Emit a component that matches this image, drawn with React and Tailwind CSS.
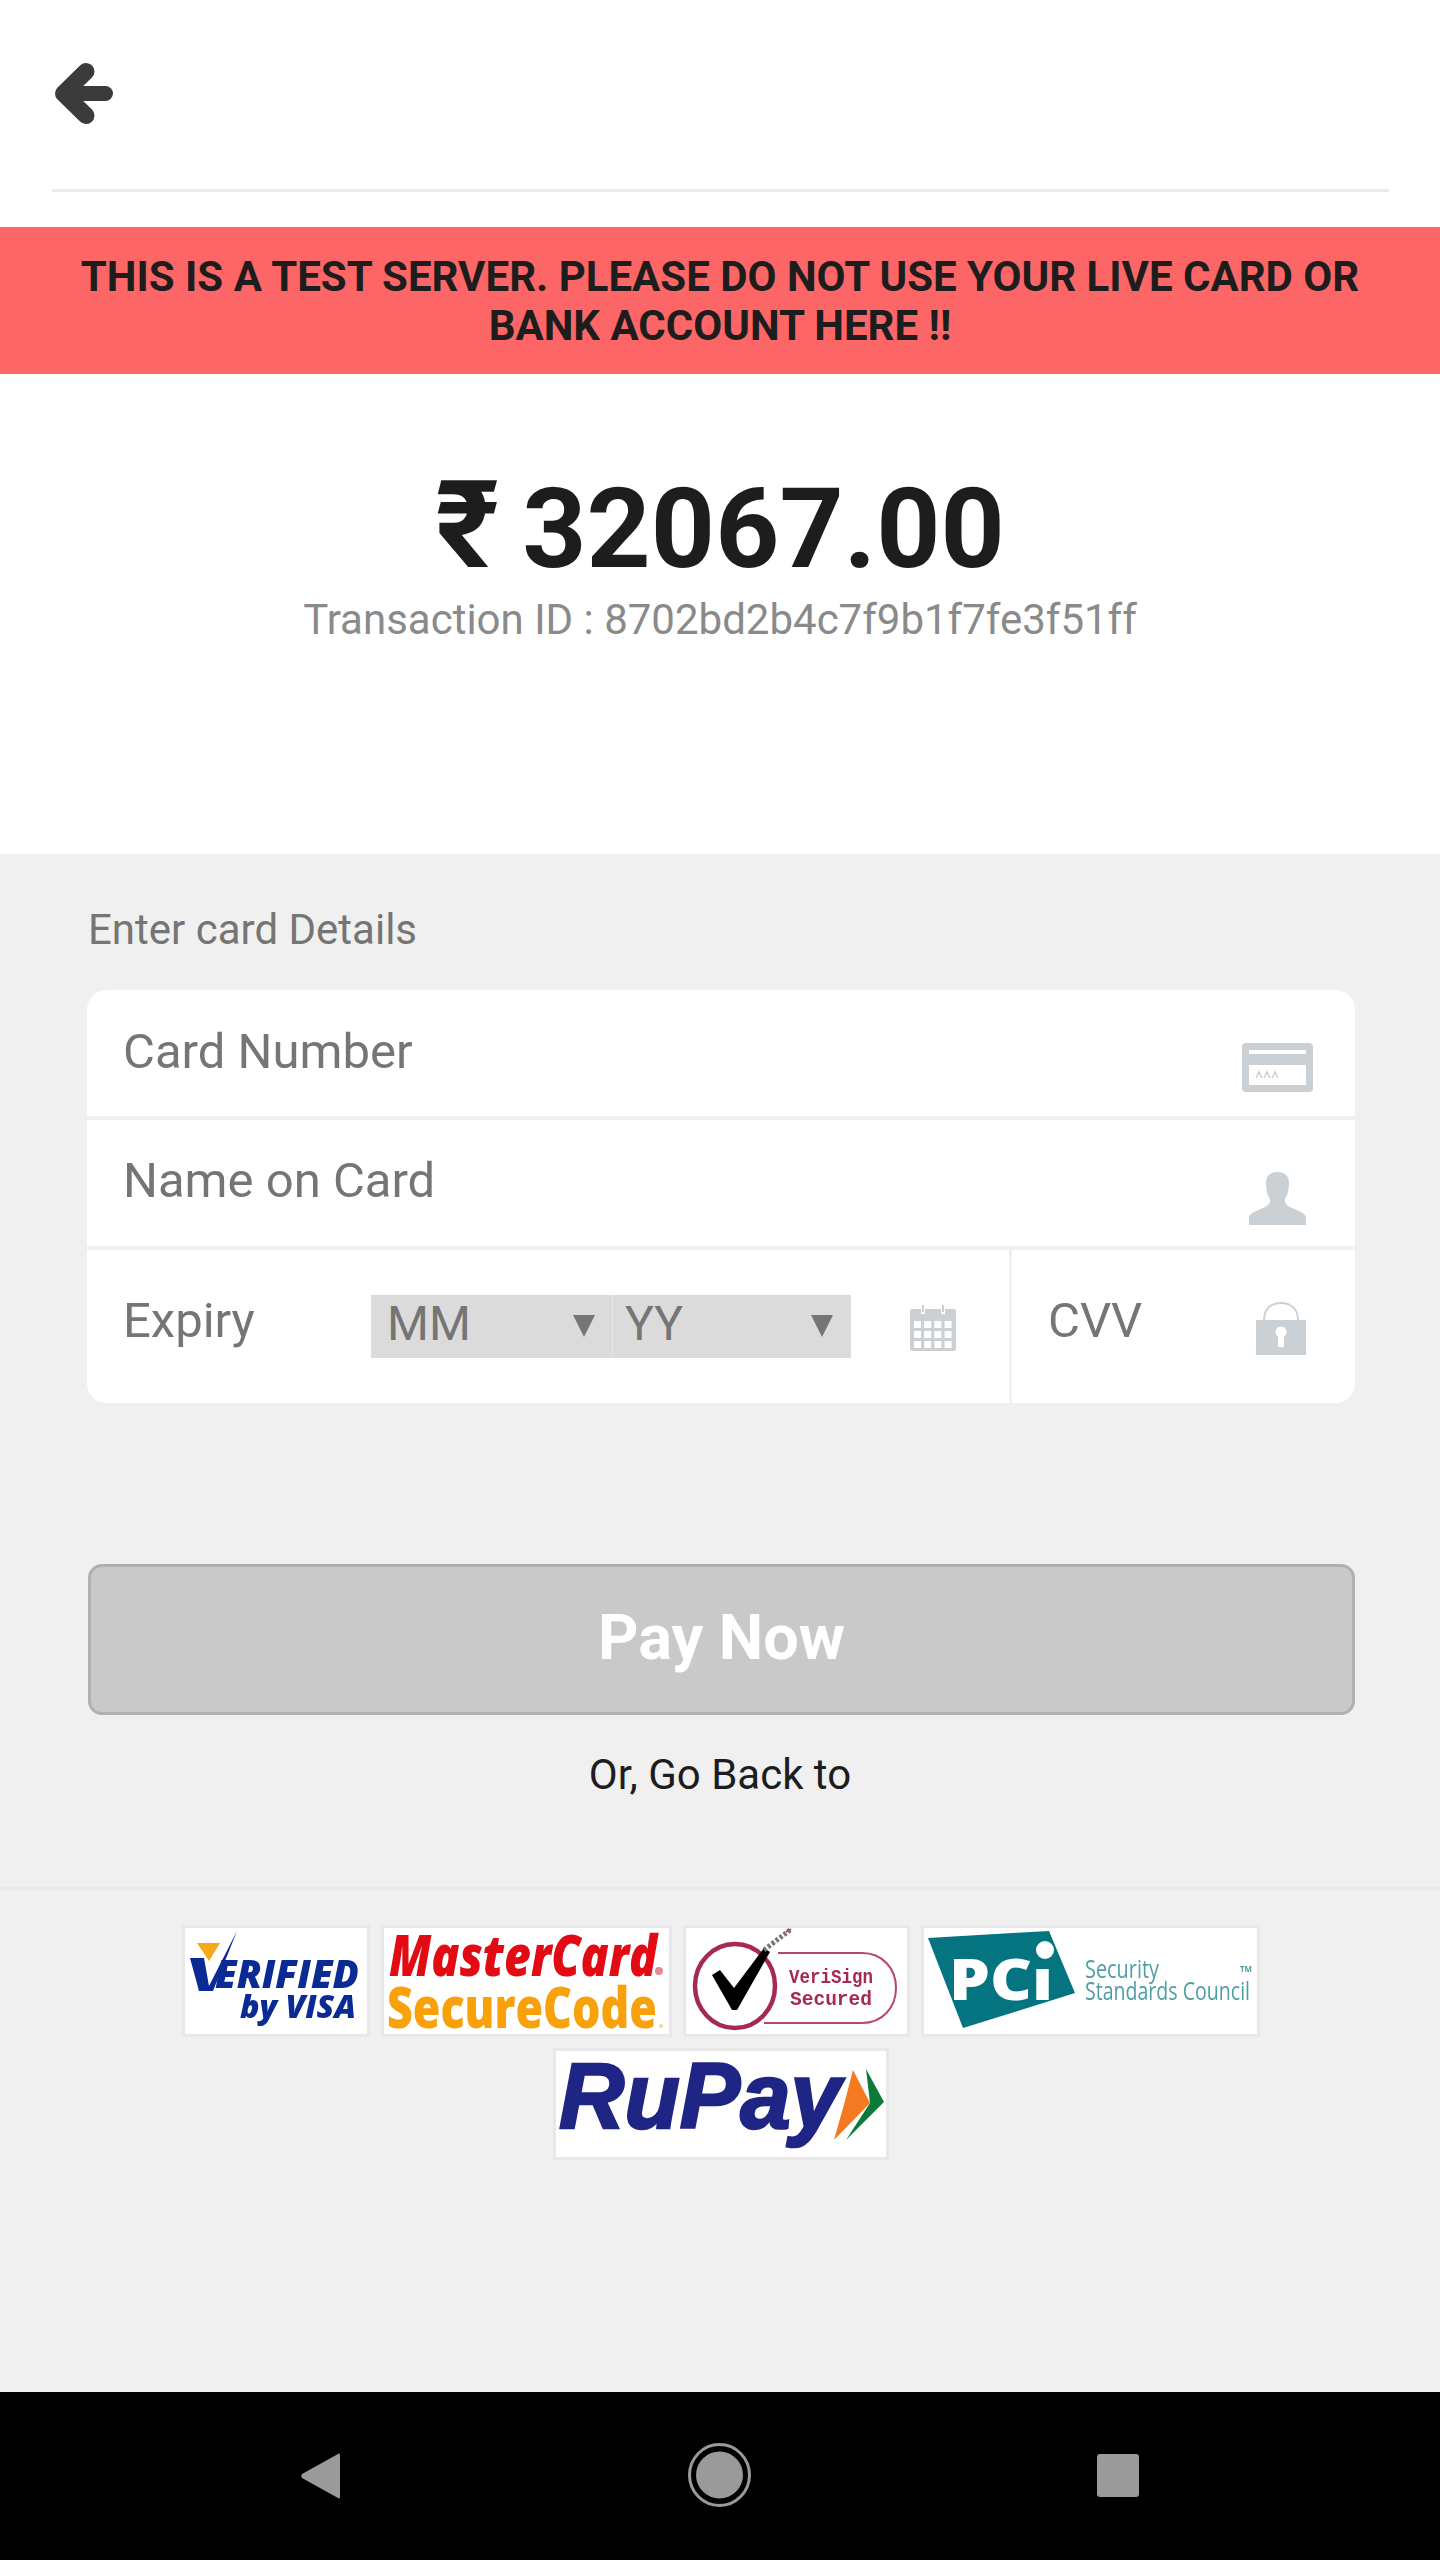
const iconGray = '#cbd0d4';

function BackArrow() {
  return (
    <svg width="58" height="61" viewBox="0 0 58 61" className="block">
      <path d="M31 8.5 L8.5 30.5 L31 52.5" fill="none" stroke="#3b3b3b" strokeWidth="17" strokeLinecap="round" strokeLinejoin="round" />
      <path d="M12 30.5 L50.5 30.5" fill="none" stroke="#3b3b3b" strokeWidth="15" strokeLinecap="round" />
    </svg>
  );
}

function CardIcon() {
  return (
    <svg width="71" height="49" viewBox="0 0 71 49" className="block">
      <rect width="71" height="49" rx="4" fill={iconGray} />
      <rect x="7" y="7" width="57" height="4" fill="#fff" />
      <rect x="7" y="22" width="57" height="20" fill="#fff" />
      <path d="M14 35 L17 29 L20 35 M22 35 L25 29 L28 35 M30 35 L33 29 L36 35" fill="none" stroke={iconGray} strokeWidth="1.5" />
    </svg>
  );
}

function PersonIcon() {
  return (
    <svg width="57" height="53" viewBox="0 0 57 53" className="block">
      <path d="M28.5 0 C36 0 40 4 40 11 C40 19 38 24 36 27 C35 31 38 34 43 36 C50 39 57 41 57 46 L57 53 L0 53 L0 46 C0 41 7 39 14 36 C19 34 22 31 21 27 C19 24 17 19 17 11 C17 4 21 0 28.5 0 Z" fill={iconGray} />
    </svg>
  );
}

function CalendarIcon() {
  const cells = [];
  for (let r = 0; r < 3; r++) {
    for (let c = 0; c < 4; c++) {
      cells.push(<rect key={r + '-' + c} x={4 + c * 10.2} y={16 + r * 10} width="7" height="7" fill="#fff" />);
    }
  }
  return (
    <svg width="46" height="46" viewBox="0 0 46 46" className="block">
      <rect y="4" width="46" height="42" rx="2" fill={iconGray} />
      <rect x="11" y="0" width="4" height="9" fill="#fff" />
      <rect x="31" y="0" width="4" height="9" fill="#fff" />
      <rect x="12" y="0" width="2" height="7" fill={iconGray} />
      <rect x="32" y="0" width="2" height="7" fill={iconGray} />
      {cells}
    </svg>
  );
}

function LockIcon() {
  return (
    <svg width="50" height="53" viewBox="0 0 50 53" className="block">
      <path d="M8 18 C8 6 16 1 25 1 C34 1 42 6 42 18" fill="none" stroke={iconGray} strokeWidth="1.8" />
      <rect y="18" width="50" height="35" fill={iconGray} />
      <circle cx="25" cy="30" r="5.5" fill="#fff" />
      <rect x="22" y="30" width="6" height="15" fill="#fff" />
    </svg>
  );
}

function Caret() {
  return (
    <svg width="22" height="22" viewBox="0 0 22 22" className="block">
      <path d="M0 0 H22 L11 22 Z" fill="#757575" />
    </svg>
  );
}

function Badge({ width, children }) {
  return (
    <div className="h-[112px] border-[3px] border-[#e8e8e8] bg-white overflow-hidden shrink-0" style={{ width }}>
      {children}
    </div>
  );
}

function VisaLogo() {
  return (
    <svg width="182" height="106" viewBox="0 0 182 106" className="block blur-[0.7px]">
      <path d="M12 15 L35 15 L24 33 Z" fill="#f4a81c" />
      <path d="M5 30 L19 30 L24 58 L52 3 L28 63 L14 63 Z" fill="#0a2a94" />
      <text x="30" y="60" textLength="144" lengthAdjust="spacingAndGlyphs" fontFamily="'Open Sans', sans-serif" fontWeight="800" fontStyle="italic" fontSize="38" fill="#0a2a94">ERIFIED</text>
      <text x="55" y="90" textLength="116" lengthAdjust="spacingAndGlyphs" fontFamily="'Open Sans', sans-serif" fontWeight="800" fontStyle="italic" fontSize="31" fill="#0a2a94">by VISA</text>
    </svg>
  );
}

function MasterLogo() {
  return (
    <svg width="285" height="106" viewBox="0 0 285 106" className="block blur-[0.7px]">
      <text x="5" y="48" textLength="268" lengthAdjust="spacingAndGlyphs" fontFamily="'Open Sans', sans-serif" fontWeight="800" fontStyle="italic" fontSize="57" fill="#e30b13">MasterCard</text>
      <circle cx="275" cy="43" r="4" fill="#e58a9a" />
      <text x="3" y="100" textLength="270" lengthAdjust="spacingAndGlyphs" fontFamily="'Open Sans', sans-serif" fontWeight="800" fontSize="57" fill="#f9a10a">SecureCode</text>
      <circle cx="277" cy="98" r="2" fill="#f9d28a" />
    </svg>
  );
}

function VerisignLogo() {
  return (
    <svg width="221" height="106" viewBox="0 0 221 106" className="block blur-[0.7px]">
      <path d="M92 25 H176 C196 25 210 40 210 60 C210 80 196 95 176 95 H78" fill="none" stroke="#b8486a" strokeWidth="2" />
      <ellipse cx="49" cy="58" rx="40" ry="42" fill="#fff" stroke="#a6294f" strokeWidth="4.5" />
      <path d="M26 47 L34 42 L48 60 L78 20 L84 24 L51 82 L46 82 Z" fill="#000" />
      <path d="M78 22 L104 2" stroke="#777" strokeWidth="5" strokeDasharray="3 2" />
      <path d="M100 4 L105 1" stroke="#b8486a" strokeWidth="2" />
      <text x="103" y="55" textLength="84" lengthAdjust="spacingAndGlyphs" fontFamily="'Liberation Mono', monospace" fontWeight="700" fontSize="20" fill="#a6294f">VeriSign</text>
      <text x="104" y="77" textLength="82" lengthAdjust="spacingAndGlyphs" fontFamily="'Liberation Mono', monospace" fontWeight="700" fontSize="20" fill="#a6294f">Secured</text>
    </svg>
  );
}

function PciLogo() {
  return (
    <svg width="333" height="106" viewBox="0 0 333 106" className="block blur-[0.7px]">
      <path d="M4 10 L125 3 L151 65 L39 100 Z" fill="#047580" />
      <text x="25" y="72" textLength="104" lengthAdjust="spacingAndGlyphs" fontFamily="'Open Sans', sans-serif" fontWeight="800" fontSize="56" fill="#fff">PCı</text>
      <circle cx="121" cy="22" r="9" fill="#fff" />
      <text x="161" y="50" textLength="74" lengthAdjust="spacingAndGlyphs" fontFamily="'Open Sans', sans-serif" fontSize="25" fill="#4f9fa6">Security</text>
      <text x="161" y="72" textLength="165" lengthAdjust="spacingAndGlyphs" fontFamily="'Open Sans', sans-serif" fontSize="25" fill="#4f9fa6">Standards Council</text>
      <text x="316" y="44" textLength="12" lengthAdjust="spacingAndGlyphs" fontFamily="'Open Sans', sans-serif" fontWeight="700" fontSize="9" fill="#4f9fa6">TM</text>
    </svg>
  );
}

function RupayLogo() {
  return (
    <svg width="330" height="105" viewBox="0 0 330 105" className="block blur-[0.6px]">
      <text x="3" y="77" textLength="282" lengthAdjust="spacingAndGlyphs" fontFamily="'Liberation Sans', sans-serif" fontWeight="700" fontStyle="italic" fontSize="92" fill="#1f2584" stroke="#1f2584" strokeWidth="2.5">RuPay</text>
      <path d="M310 18 L328 51 L290 89 L314 52 Z" fill="#0c7a38" />
      <path d="M297 19 L314 52 L278 89 L289 50 Z" fill="#f47920" />
    </svg>
  );
}

export default function App() {
  return (
    <div className="w-[1440px] h-[2560px] flex flex-col bg-white font-['Roboto',sans-serif]">
      {/* header */}
      <div className="h-[227px] pl-[52px] pr-[51px] shrink-0">
        <div className="h-[192px] pt-[63px] pl-[3px] border-b-[3px] border-[#ebebeb]">
          <BackArrow />
        </div>
      </div>

      <div className="h-[147px] shrink-0 bg-[#fc6666] flex items-center justify-center">
        <p className="w-[1320px] text-center text-[42px] leading-[49px] font-bold text-[#1d1d1d]">
          THIS IS A TEST SERVER. PLEASE DO NOT USE YOUR LIVE CARD OR BANK ACCOUNT HERE !!
        </p>
      </div>

      <div className="h-[480px] shrink-0 pt-[99px] text-center">
        <div className="text-[112px] leading-none font-bold text-[#1d1d1d]">
          <span className="text-[122px] leading-[0] tracking-[-5px]">₹</span> 32067.00
        </div>
        <div className="mt-[14px] text-[42px] leading-none text-[#8a8a8a]">Transaction ID : 8702bd2b4c7f9b1f7fe3f51ff</div>
      </div>

      {/* card form */}
      <div className="flex-1 bg-[#f0f0f0]">
        <div className="pl-[88px] pt-[55px] h-[136px] text-[42px] leading-none text-[#757575]">Enter card Details</div>

        <div className="ml-[87px] w-[1268px] h-[413px] bg-white rounded-[20px] overflow-hidden flex flex-col">
          <div className="h-[126px] pl-[36px] pr-[42px] pt-[37px] flex justify-between items-start">
            <span className="text-[49px] leading-none text-[#757575]">Card Number</span>
            <div className="mt-[16px]"><CardIcon /></div>
          </div>
          <div className="h-[4px] bg-[#f0f0f0]" />
          <div className="h-[126px] pl-[36px] pr-[49px] pt-[36px] flex justify-between items-start">
            <span className="text-[49px] leading-none text-[#757575]">Name on Card</span>
            <div className="mt-[16px]"><PersonIcon /></div>
          </div>
          <div className="h-[4px] bg-[#f0f0f0]" />
          <div className="h-[153px] flex items-start">
            <div className="w-[922px] h-full pl-[36px] flex items-start">
              <span className="w-[248px] pt-[46px] text-[49px] leading-none text-[#757575]">Expiry</span>
              <div className="mt-[45px] w-[480px] h-[63px] bg-[#dbdbdb] flex text-[48px] leading-none text-[#757575]">
                <div className="w-[241px] pl-[16px] pr-[17px] pt-[5px] flex justify-between items-start">
                  <span>MM</span>
                  <div className="mt-[15px]"><Caret /></div>
                </div>
                <div className="w-[1px] bg-[#e6e6e6]" />
                <div className="w-[238px] pl-[12px] pr-[18px] pt-[5px] flex justify-between items-start">
                  <span>YY</span>
                  <div className="mt-[15px]"><Caret /></div>
                </div>
              </div>
              <div className="ml-[59px] mt-[55px]"><CalendarIcon /></div>
            </div>
            <div className="w-[3px] h-full bg-[#f0f0f0]" />
            <div className="flex-1 h-full pl-[36px] pr-[49px] flex justify-between items-start">
              <span className="pt-[46px] text-[49px] leading-none text-[#757575]">CVV</span>
              <div className="mt-[52px]"><LockIcon /></div>
            </div>
          </div>
        </div>

        <div className="ml-[88px] mt-[161px] w-[1267px] h-[151px] pb-[3px] bg-[#c9c9c9] border-[3px] border-[#b0b0b0] rounded-[14px] flex items-center justify-center text-[63px] font-bold text-white">
          Pay Now
        </div>

        <div className="mt-[39px] text-center text-[42px] leading-none text-[#1d1d1d]">Or, Go Back to</div>

        <div className="mt-[91px] h-[3px] bg-[#e9e9e9]" />

        <div className="mt-[35px] pl-[2px] flex justify-center gap-[11px]">
          <Badge width={188}><VisaLogo /></Badge>
          <Badge width={291}><MasterLogo /></Badge>
          <Badge width={227}><VerisignLogo /></Badge>
          <Badge width={339}><PciLogo /></Badge>
        </div>
        <div className="mt-[11px] pl-[2px] flex justify-center">
          <Badge width={336}><RupayLogo /></Badge>
        </div>
      </div>

      {/* android nav bar */}
      <div className="h-[168px] shrink-0 bg-black pl-[301px] flex items-start">
        <svg width="39" height="46" viewBox="0 0 39 46" className="block mt-[61px]">
          <path d="M37 1 C38 0 39 1 39 2 V44 C39 45 38 46 37 45 L1 25 C0 24 0 22 1 21 Z" fill="#9a9a9a" />
        </svg>
        <svg width="63" height="64" viewBox="0 0 63 64" className="block ml-[348px] mt-[51px]">
          <ellipse cx="31.5" cy="32" rx="30" ry="30.5" fill="none" stroke="#9a9a9a" strokeWidth="3" />
          <ellipse cx="31.5" cy="32" rx="23.5" ry="23.5" fill="#9a9a9a" />
        </svg>
        <div className="ml-[346px] mt-[62px] w-[42px] h-[43px] rounded-[3px] bg-[#9a9a9a]" />
      </div>
    </div>
  );
}
